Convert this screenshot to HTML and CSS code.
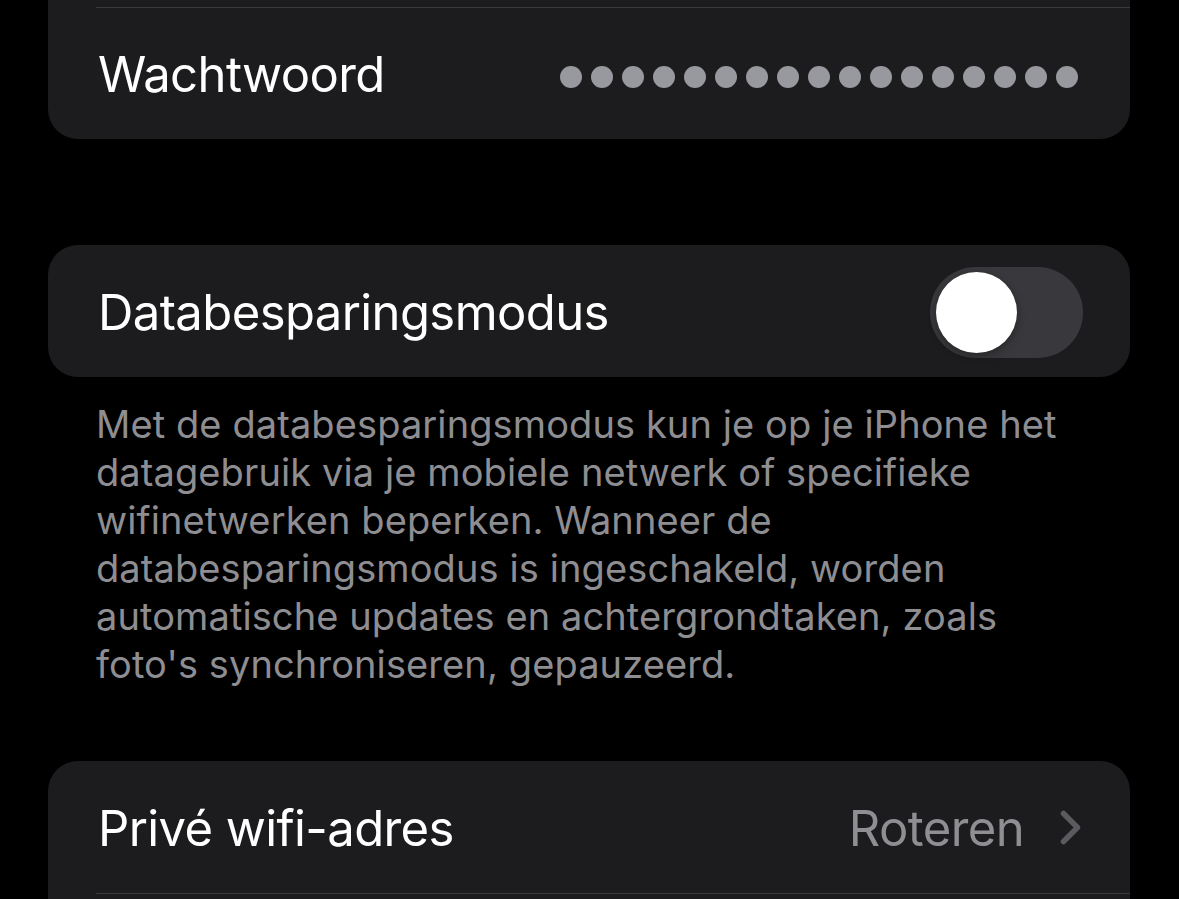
FILE: index.html
```html
<!DOCTYPE html>
<html lang="nl">
<head>
    <meta charset="UTF-8">
    <meta name="viewport" content="width=device-width, initial-scale=1.0">
    <title>Wifi-instellingen</title>
    <link rel="stylesheet" href="styles.css">
</head>
<body>

<div class="settings">
    <!-- Card continues from above the fold -->
    <div class="group group-cut">
        <div class="row">
            <span class="label">Wachtwoord</span>
            <span class="dots">
                <i></i><i></i><i></i><i></i><i></i><i></i><i></i><i></i><i></i>
                <i></i><i></i><i></i><i></i><i></i><i></i><i></i><i></i>
            </span>
        </div>
    </div>

    <div class="group group-toggle">
        <div class="row">
            <span class="label">Databesparingsmodus</span>
            <span class="switch"><span class="knob"></span></span>
        </div>
    </div>
    <p class="footer">
        Met de databesparingsmodus kun je op je iPhone het datagebruik via je mobiele netwerk of specifieke wifinetwerken beperken. Wanneer de databesparingsmodus is ingeschakeld, worden automatische updates en achtergrondtaken, zoals foto's synchroniseren, gepauzeerd.
    </p>

    <div class="group group-open">
        <div class="row">
            <span class="label">Privé wifi-adres</span>
            <span class="value">Roteren</span>
            <svg class="chevron" width="21" height="35" viewBox="0 0 21 35">
                <path d="M3.5 3.5 L17.5 17.5 L3.5 31.5" fill="none" stroke="currentColor" stroke-width="5.5" stroke-linecap="round" stroke-linejoin="round"/>
            </svg>
        </div>
        <div class="row row-next"></div>
    </div>
</div>

</body>
</html>
```

FILE: styles.css
```css
body {
    margin: 0;
    background-color: #000000;
    font-family: Inter, "Noto Sans", sans-serif;
    color: #ffffff;
    overflow: hidden;
}
.settings {
    padding: 0 49px 0 48px;
}
.group {
    background-color: #1c1c1e;
    border-radius: 30px;
    overflow: hidden;
}
.group-cut {
    border-top-left-radius: 0;
    border-top-right-radius: 0;
    padding-top: 7px;
}
.group-cut .row {
    border-top: 1px solid #3a3a3c;
}
.group-toggle {
    margin-top: 106px;
}
.group-open {
    margin-top: 73px;
    border-bottom-left-radius: 0;
    border-bottom-right-radius: 0;
}
.row {
    height: 132px;
    margin-left: 48px;
    padding-right: 49px;
    display: flex;
    align-items: center;
    box-sizing: border-box;
}
.row-next {
    height: 10px;
    border-top: 1px solid #3a3a3c;
}
.label {
    font-size: 49px;
    letter-spacing: -0.6px;
    flex: 1;
    padding-left: 2px;
    margin-top: 2px;
}
.dots {
    display: flex;
    gap: 9px;
    margin-right: 3px;
    margin-top: 6px;
}
.dots i {
    width: 22px;
    height: 22px;
    border-radius: 50%;
    background-color: #98989f;
}
.switch {
    width: 153px;
    height: 91px;
    border-radius: 46px;
    background-color: #39393d;
    margin-right: -2px;
    margin-top: 2px;
    padding: 5px 6px;
    box-sizing: border-box;
}
.knob {
    display: block;
    width: 81px;
    height: 81px;
    border-radius: 50%;
    background-color: #ffffff;
    box-shadow: 0 3px 8px rgba(0, 0, 0, 0.35), 0 0 1px rgba(0, 0, 0, 0.2);
}
.value {
    font-size: 49px;
    letter-spacing: -0.6px;
    color: #8e8e93;
    margin-right: 36px;
    margin-top: 2px;
}
.chevron {
    color: #5a5a5f;
}
.footer {
    margin: 23px 0 0 48px;
    width: 1000px;
    font-size: 38px;
    line-height: 48px;
    letter-spacing: 0.1px;
    color: #8e8e92;
}
```
